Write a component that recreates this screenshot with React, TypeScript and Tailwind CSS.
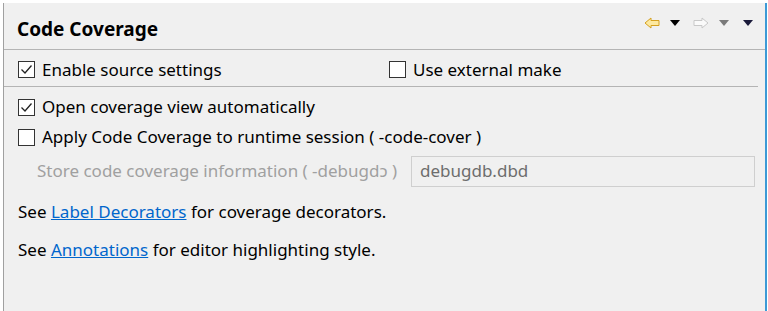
import React from "react";

function Check({ checked }: { checked?: boolean }) {
  return (
    <div className="w-[17px] h-[17px] border border-[#333] bg-white flex items-center justify-center shrink-0">
      {checked && (
        <svg width="13" height="13" viewBox="0 0 13 13">
          <path d="M1.5 6.5 L5 10 L11.5 2.5" fill="none" stroke="#222" strokeWidth="1.3" />
        </svg>
      )}
    </div>
  );
}

function Tri({ color }: { color: string }) {
  return (
    <svg width="10" height="6" viewBox="0 0 10 6">
      <path d="M0 0 L10 0 L5 6 Z" fill={color} />
    </svg>
  );
}

export default function App() {
  return (
    <div
      className="w-[768px] h-[311px] bg-white pt-[3px] overflow-hidden"
      style={{ fontFamily: '"Noto Sans", "Open Sans", sans-serif' }}
    >
      <div className="h-[308px] bg-[#f0f0f0] border-l border-[#a0a0a0] ml-[3px] mr-[1px] border-r-2 border-r-[#3c9ad6] flex flex-col">
        <div className="h-[47px] flex items-center justify-between pl-[13px] pr-[12px] border-b border-[#b4b4b4]">
          <div className="text-[19px] font-bold text-black leading-none pt-[6px]">Code Coverage</div>
          <div className="flex items-center gap-[10px] pb-[6px]">
            <svg width="16" height="12" viewBox="0 0 16 12">
              <path d="M1 6 L7 1 L7 3.5 L15 3.5 L15 8.5 L7 8.5 L7 11 Z" fill="#fde9a0" stroke="#d4a020" strokeWidth="1" />
            </svg>
            <Tri color="#000" />
            <svg width="16" height="12" viewBox="0 0 16 12" className="ml-[3px]">
              <path d="M15 6 L9 1 L9 3.5 L1 3.5 L1 8.5 L9 8.5 L9 11 Z" fill="#fafafa" stroke="#c8c8c8" strokeWidth="1" />
            </svg>
            <Tri color="#7a7a7a" />
            <div className="ml-[4px]"><Tri color="#1a1a3a" /></div>
          </div>
        </div>
        <div className="h-[37px] flex items-center pl-[14px] pt-[3px] border-b border-[#b4b4b4] mr-[7px] text-[17px] text-black">
          <div className="flex items-center gap-[7px] w-[371px]">
            <Check checked />
            <span>Enable source settings</span>
          </div>
          <div className="flex items-center gap-[7px]">
            <Check />
            <span>Use external make</span>
          </div>
        </div>
        <div className="pl-[14px] pt-[7px] flex flex-col text-[17px] text-black">
          <div className="h-[26px] flex items-center gap-[7px]">
            <Check checked />
            <span>Open coverage view automatically</span>
          </div>
          <div className="h-[34px] flex items-center gap-[7px]">
            <Check />
            <span>Apply Code Coverage to runtime session ( -code-cover )</span>
          </div>
          <div className="h-[34px] flex items-center pl-[19px] pr-[10px]">
            <span className="text-[#a0a0a0] w-[374px] whitespace-nowrap overflow-hidden">Store code coverage information ( -debugdɔ )</span>
            <div className="flex-1 h-[31px] border border-[#cfcfcf] bg-[#f0f0f0] flex items-center pl-[8px] text-[#6d6d6d]">debugdb.dbd</div>
          </div>
          <div className="h-[40px] flex items-center mt-[4px]">
            <span>See <span className="text-[#0066cc] underline">Label Decorators</span> for coverage decorators.</span>
          </div>
          <div className="h-[36px] flex items-center">
            <span>See <span className="text-[#0066cc] underline">Annotations</span> for editor highlighting style.</span>
          </div>
        </div>
      </div>
    </div>
  );
}
